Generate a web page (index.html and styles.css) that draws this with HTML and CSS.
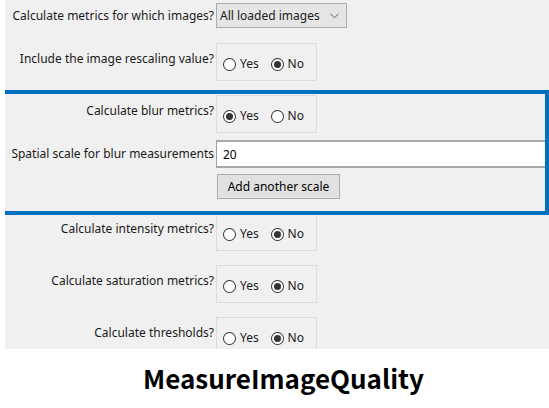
FILE: index.html
```html
<!DOCTYPE html>
<html>
<head>
<meta charset="utf-8">
<link rel="stylesheet" href="styles.css">
</head>
<body>
<div class="panel">
  <div class="row">
    <div class="label">Calculate metrics for which images?</div>
    <div class="select"><span>All loaded images</span>
      <svg class="chev" width="9" height="6" viewBox="0 0 9 6"><path d="M0.5 0.8 L4.5 4.8 L8.5 0.8" fill="none" stroke="#606060" stroke-width="1"/></svg>
    </div>
  </div>
  <div class="row gap15">
    <div class="label up">Include the image rescaling value?</div>
    <div class="group"><span class="radio"></span><span class="opt">Yes</span><span class="radio on"></span><span class="opt">No</span></div>
  </div>
  <div class="row">
    <div class="label up">Calculate blur metrics?</div>
    <div class="group"><span class="radio on"></span><span class="opt">Yes</span><span class="radio"></span><span class="opt">No</span></div>
  </div>
  <div class="row gap7">
    <div class="label">Spatial scale for blur measurements</div>
    <div class="input">20</div>
  </div>
  <div class="row gap6">
    <div class="label"></div>
    <div class="button">Add another scale</div>
  </div>
  <div class="row">
    <div class="label up">Calculate intensity metrics?</div>
    <div class="group"><span class="radio"></span><span class="opt">Yes</span><span class="radio on"></span><span class="opt">No</span></div>
  </div>
  <div class="row">
    <div class="label up">Calculate saturation metrics?</div>
    <div class="group"><span class="radio"></span><span class="opt">Yes</span><span class="radio on"></span><span class="opt">No</span></div>
  </div>
  <div class="row">
    <div class="label up">Calculate thresholds?</div>
    <div class="group"><span class="radio"></span><span class="opt">Yes</span><span class="radio on"></span><span class="opt">No</span></div>
  </div>
  <div class="highlight"></div>
</div>
<div class="caption">MeasureImageQuality</div>
</body>
</html>
```
FILE: styles.css
```css
html, body {
  margin: 0;
  padding: 0;
  background: #ffffff;
}
body {
  width: 549px;
  height: 408px;
  overflow: hidden;
  font-family: "Noto Sans", "Open Sans", sans-serif;
  font-size: 12px;
  color: #1a1a1a;
}
.panel {
  position: relative;
  margin-left: 5px;
  height: 346px;
  padding-top: 3px;
  background: #f0f0f0;
  display: flex;
  flex-direction: column;
  overflow: hidden;
}
.row {
  display: grid;
  grid-template-columns: 209px auto;
  column-gap: 2px;
  align-items: center;
  margin-top: 14px;
}
.row:first-child { margin-top: 0; }
.row.gap15 { margin-top: 15px; }
.row.gap7 { margin-top: 7px; }
.row.gap6 { margin-top: 6px; }
.label {
  text-align: right;
  white-space: nowrap;
  line-height: 16px;
}
.label.up { padding-bottom: 6px; }
.select {
  width: 131px;
  height: 25px;
  box-sizing: border-box;
  border: 1px solid #adadad;
  background: #e5e5e5;
  display: flex;
  align-items: center;
  justify-content: space-between;
  padding: 0 7px 0 3px;
}
.chev { display: block; }
.group {
  width: 101px;
  height: 38px;
  box-sizing: border-box;
  border: 1px solid #dcdcdc;
  display: flex;
  align-items: center;
  padding: 6px 0 2px 6px;
}
.radio {
  width: 13px;
  height: 13px;
  box-sizing: border-box;
  border: 1px solid #333333;
  border-radius: 50%;
  background: #ffffff;
  position: relative;
}
.radio.on::after {
  content: "";
  position: absolute;
  left: 2px;
  top: 2px;
  width: 7px;
  height: 7px;
  border-radius: 50%;
  background: #333333;
}
.opt {
  margin-left: 4px;
  margin-right: 12px;
  line-height: 16px;
}
.input {
  width: 340px;
  height: 28px;
  box-sizing: border-box;
  border: 1px solid #a0a0a0;
  border-top: 2px solid #a8a8a8;
  border-bottom: 2px solid #a8a8a8;
  background: #ffffff;
  padding: 0 6px;
  display: flex;
  align-items: center;
  color: #000;
}
.button {
  width: 123px;
  height: 25px;
  margin-left: 1px;
  box-sizing: border-box;
  border: 1px solid #adadad;
  background: #e1e1e1;
  display: flex;
  align-items: center;
  justify-content: center;
  color: #000;
}
.highlight {
  position: absolute;
  left: -5px;
  top: 90px;
  width: 549px;
  height: 125px;
  box-sizing: border-box;
  border: 4px solid #0070c0;
}
.caption {
  height: 56px;
  padding-bottom: 3px;
  display: flex;
  align-items: center;
  justify-content: center;
  padding-left: 18px;
  font-family: "Noto Sans CJK JP", "Noto Sans", sans-serif;
  font-weight: 700;
  font-size: 26px;
  color: #000;
}
```
